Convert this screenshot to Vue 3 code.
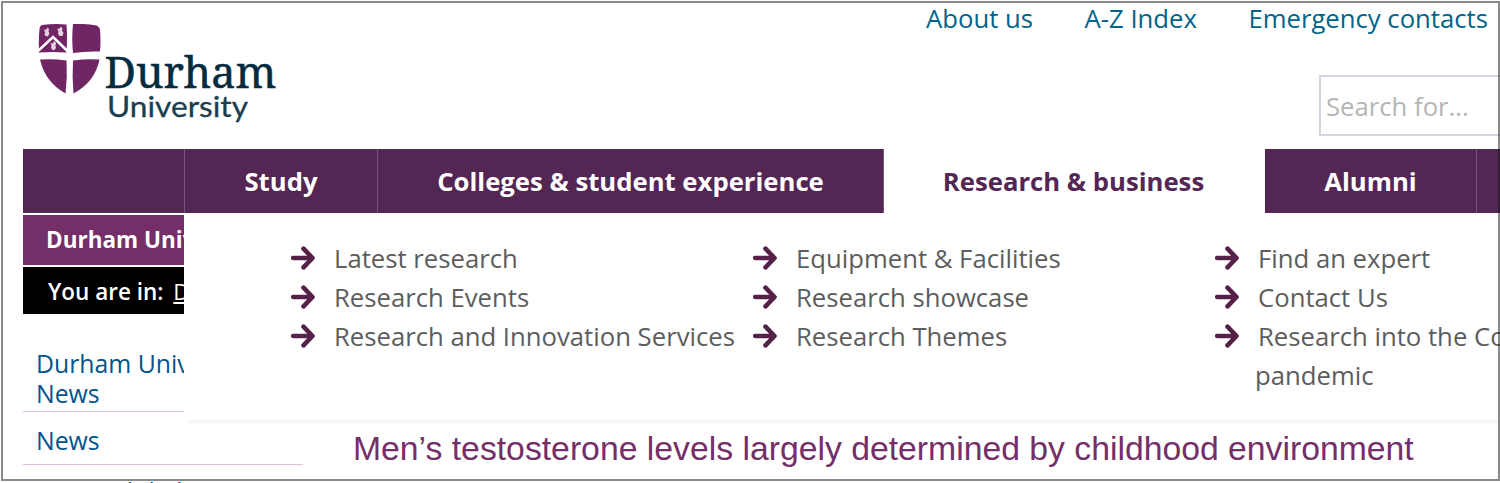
<script setup>
import { ref } from 'vue';

const topLinks = ref(['About us', 'A-Z Index', 'Emergency contacts']);

const tabs = ref([
  { label: '', name: 'home' },
  { label: 'Study', name: 'study' },
  { label: 'Colleges & student experience', name: 'colleges' },
  { label: 'Research & business', name: 'research' },
  { label: 'Alumni', name: 'alumni' },
  { label: '', name: 'more' },
]);
const activeTab = ref('research');

// columns of the open drop-down menu
const menu = ref([
  [['Latest research'], ['Research Events'], ['Research and Innovation Services']],
  [['Equipment & Facilities'], ['Research showcase'], ['Research Themes']],
  [['Find an expert'], ['Contact Us'], ['Research into the Covid-19', 'pandemic']],
]);
</script>

<template>
  <div class="page">
    <header class="header">
      <div class="logo">
        <svg class="shield" viewBox="0 0 64 72" width="64" height="72">
          <path fill="#702664" d="M4 1 Q16 -0.500 28.500 0.500 Q29.500 14 28.500 28.500 Q15 27.500 1 28.500 Q0.500 14 1.500 5 Q2 1.500 4 1Z" />
          <path fill="#702664" d="M35 0 Q48 -0.500 58.500 1.500 Q61.500 2.500 62 6 Q63 17 62 27.500 Q48 27 35 29 Q33.500 15 35 0Z" />
          <path fill="#702664" d="M2 35.500 Q15 34.500 28.500 36.500 Q29.500 53 27.500 69.500 Q7 58 2 35.500Z" />
          <path fill="#702664" d="M35 36.500 Q48 34.500 61.500 35.500 Q57 58 35.500 69.500 Q34 53 35 36.500Z" />
          <path fill="none" stroke="#fff" stroke-width="2.600" d="M0.500 26.500 L15 13 L29.500 27" />
          <g fill="#fff" opacity="0.8">
            <path d="M6 5 L8 6 L9.500 3.500 L11 5 L10.500 8 L11.500 9 L10 12.500 L7.500 12 L6.500 10.500 L7 8.500Z" />
            <path d="M19 4.500 L21 5 L23 2.500 L24.500 4.500 L24 7 L25.500 8.500 L24.500 12 L21.500 12 L20 9.500 L20.500 7.500Z" />
            <path d="M12.500 19 L14.500 19.500 L16.500 17 L18 19 L17.500 22 L18 24 L16 26.500 L14 25.500 L13 23.500 L13.500 21.500Z" />
          </g>
        </svg>
        <div class="wordmark">
          <svg width="176" height="84" viewBox="0 0 176 84">
            <text class="durham" x="-0.500" y="47.500" textLength="172" lengthAdjust="spacingAndGlyphs">Durham</text>
            <text class="university" x="2" y="77" textLength="141" lengthAdjust="spacingAndGlyphs">University</text>
          </svg>
        </div>
      </div>
      <div class="tools">
        <nav class="top-links">
          <a v-for="link in topLinks" :key="link">{{ link }}</a>
        </nav>
        <div class="search">Search for...</div>
      </div>
    </header>

    <nav class="tabs">
      <a v-for="tab in tabs" :key="tab.name" class="tab" :class="[tab.name, { active: tab.name === activeTab }]">{{ tab.label }}</a>
    </nav>

    <div class="body">
      <aside class="side">
        <div class="side-title">Durham University</div>
        <div class="crumbs">You are in: <u>Durham</u></div>
        <a class="side-link first">Durham University<br>News</a>
        <a class="side-link wide">News</a>
        <a class="side-link next">Research links</a>
      </aside>
      <main class="main">
        <div class="mega">
          <ul v-for="(column, i) in menu" :key="i">
            <li v-for="lines in column" :key="lines[0]">
              <svg class="arrow" viewBox="0 0 24 24" width="24" height="24">
                <path d="M2.200 12 H20 M12.500 2.700 L21.500 12 L12.500 21.300" />
              </svg>
              <div>
                <div v-for="line in lines" :key="line" class="line">{{ line }}</div>
              </div>
            </li>
          </ul>
        </div>
        <h1>Men’s testosterone levels largely determined by childhood environment</h1>
      </main>
    </div>
    <div class="frame"></div>
  </div>
</template>

<style>
body {
  margin: 0;
  background: #fff;
}
</style>

<style scoped>
.page {
  position: relative;
  width: 1500px;
  height: 483px;
  overflow: hidden;
  font-family: "Open Sans", "Noto Sans", sans-serif;
  font-size: 25.700px;
}

/* thin outline over the whole page */
.frame {
  position: absolute;
  top: 1px;
  left: 1px;
  width: 1495px;
  height: 476px;
  border: 2px solid rgba(20, 20, 20, 0.5);
}

.header {
  display: flex;
  justify-content: space-between;
  height: 149px;
}

.logo {
  display: flex;
  padding: 24px 0 0 38px;
}

.shield {
  flex: none;
}

.wordmark {
  margin: 16px 0 0 3px;
}

.wordmark svg {
  overflow: visible;
}

.durham {
  font-family: "Noto Serif", "DejaVu Serif", serif;
  font-size: 44.500px;
  fill: #052b3f;
  stroke: #052b3f;
  stroke-width: 0.500px;
}

.university {
  font-family: Lato, sans-serif;
  font-size: 29.500px;
  fill: #193e51;
  stroke: #193e51;
  stroke-width: 0.300px;
}

.tools {
  display: flex;
  flex-direction: column;
  align-items: flex-end;
}

.top-links {
  display: flex;
  gap: 51.500px;
  padding: 1px 12px 0 0;
  height: 74px;
  line-height: 35px;
  color: #006388;
}

.search {
  box-sizing: border-box;
  width: 181px;
  height: 61px;
  padding-left: 5px;
  border: 2px solid #d3d7e1;
  border-right: none;
  line-height: 59px;
  color: #b5b5b5;
}

.tabs {
  display: flex;
  height: 64px;
  margin-left: 23px;
  font-weight: 700;
  line-height: 65px;
  text-align: center;
}

.tab {
  box-sizing: border-box;
  flex: none;
  height: 64px;
  border-right: 1px solid #77517a;
  background: #542654;
  color: #fff;
}

.home { width: 162px; }
.study { width: 193px; }
.colleges { width: 506px; }
.research { width: 381px; }
.alumni { width: 212px; }
.more { width: 23px; border: none; }

.tab.active {
  padding-right: 2px;
  border: none;
  background: #fff;
  color: #542654;
}

.body {
  display: flex;
  height: 270px;
}

.side {
  width: 161px;
  padding: 2px 0 0 23px;
  white-space: nowrap;
  color: #fff;
}

.side-title,
.crumbs {
  overflow: hidden;
  font-size: 22.500px;
  font-weight: 700;
}

.side-title {
  height: 50px;
  padding-left: 23px;
  background: #742e68;
  line-height: 49px;
}

.crumbs {
  height: 47px;
  margin: 2px 0 34px;
  padding-left: 25px;
  background: #000;
  font-weight: 600;
  line-height: 50px;
}

.crumbs u {
  margin-left: 4px;
  font-weight: 400;
}

.side-link {
  display: block;
  overflow: hidden;
  height: 52px;
  padding-left: 13px;
  border-bottom: 1px solid #dcc3da;
  font-size: 24.800px;
  line-height: 57px;
  color: #00558b;
}

.side-link.first {
  height: 63px;
  line-height: 30px;
}

.side-link.wide {
  width: 267px;
}

.side-link.next {
  border: none;
  line-height: 52px;
}

.main {
  flex: 1;
  min-width: 0;
}

.mega {
  display: flex;
  box-sizing: border-box;
  height: 207px;
  padding: 26px 0 0 107px;
  background: #fff;
  box-shadow: 4px 3px 3px rgba(0, 0, 0, 0.05);
}

ul {
  flex: none;
  width: 462px;
  margin: 0;
  padding: 0;
  list-style: none;
}

li {
  display: flex;
  line-height: 39px;
  white-space: nowrap;
  color: #5d5d5d;
}

/* wrapped lines hang slightly to the left of the first one */
.line + .line {
  margin-left: -3px;
}

.arrow {
  flex: none;
  margin: 7px 19px 0 0;
  fill: none;
  stroke: #552148;
  stroke-width: 4.600;
  stroke-linecap: round;
  stroke-linejoin: round;
}

h1 {
  margin: 9px 0 0 169px;
  font-family: "Liberation Sans", Arial, sans-serif;
  font-size: 33.740px;
  font-weight: 400;
  line-height: 38px;
  white-space: nowrap;
  color: #742e68;
}
</style>
